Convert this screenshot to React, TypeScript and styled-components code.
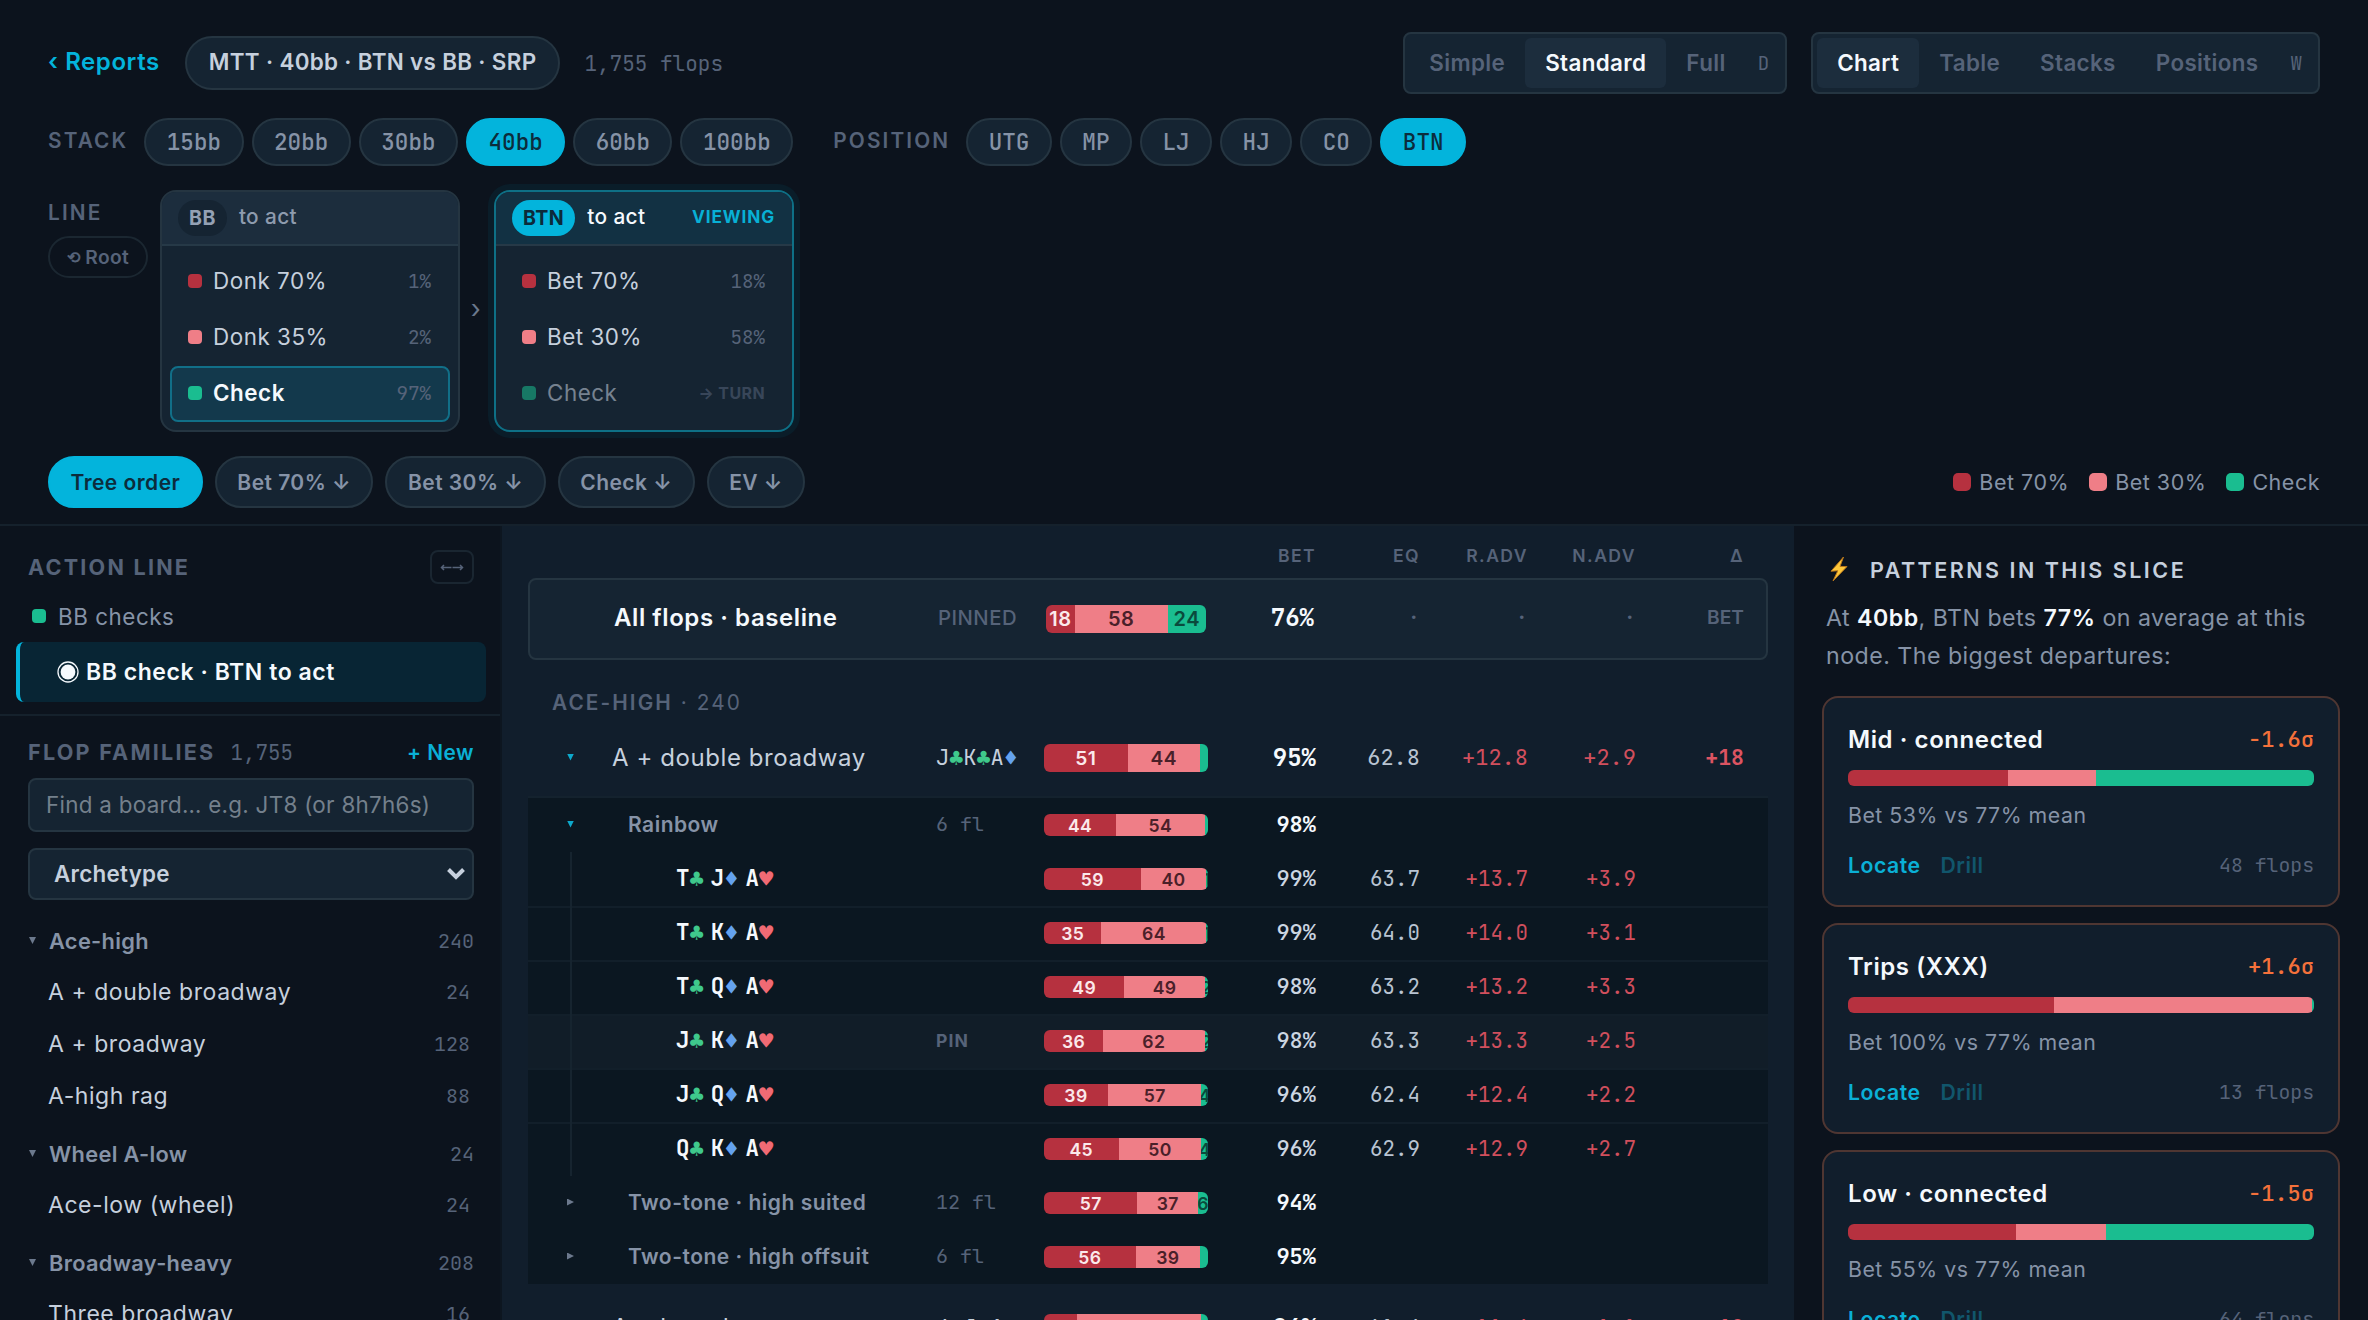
import { Fragment } from "react";
import styled, { createGlobalStyle, css } from "styled-components";

const sans = `Inter, "Liberation Sans", sans-serif`;

const mono = css`
  font-family: "JetBrains Mono", "DejaVu Sans Mono", "Liberation Mono", monospace;
  letter-spacing: 0;
`;

const color = {
  bg: "#0c131d",
  center: "#111e2c",
  sub: "#0b1721",
  surface: "#152432",
  raised: "#1c2d3d",
  line: "#253541",
  lineSoft: "#15212c",
  white: "#f5f9fd",
  text: "#c6d0dd",
  mid: "#8693a7",
  dim: "#566379",
  cyan: "#03b4dc",
  red: "#b6313f",
  pink: "#ef7e87",
  green: "#1abd90",
};

type Mix = [number, number, number];

interface IBoardCard {
  rank: string;
  suit: "c" | "d" | "h";
}

interface ILeaf {
  cards: IBoardCard[];
  mix: Mix;
  bet: string;
  eq: string;
  radv: string;
  nadv: string;
  pinned?: boolean;
}

const suitGlyph = { c: "♣", d: "♦", h: "♥" };
const suitColor = { c: "#3fc98c", d: "#64a2ee", h: "#f06a74" };

const stacks = ["15bb", "20bb", "30bb", "40bb", "60bb", "100bb"];
const positions = ["UTG", "MP", "LJ", "HJ", "CO", "BTN"];
const sorts = ["Tree order", "Bet 70% ↓", "Bet 30% ↓", "Check ↓", "EV ↓"];

const families = [
  {
    name: "Ace-high",
    count: 240,
    items: [
      { name: "A + double broadway", count: 24 },
      { name: "A + broadway", count: 128 },
      { name: "A-high rag", count: 88 },
    ],
  },
  {
    name: "Wheel A-low",
    count: 24,
    items: [{ name: "Ace-low (wheel)", count: 24 }],
  },
  {
    name: "Broadway-heavy",
    count: 208,
    items: [{ name: "Three broadway", count: 16 }],
  },
];

const board = (ranks: string, suits = "cdh"): IBoardCard[] =>
  ranks.split("").map((rank, i) => ({ rank, suit: suits[i] as "c" | "d" | "h" }));

const leaves: ILeaf[] = [
  { cards: board("TJA"), mix: [59, 40, 1], bet: "99%", eq: "63.7", radv: "+13.7", nadv: "+3.9" },
  { cards: board("TKA"), mix: [35, 64, 1], bet: "99%", eq: "64.0", radv: "+14.0", nadv: "+3.1" },
  { cards: board("TQA"), mix: [49, 49, 2], bet: "98%", eq: "63.2", radv: "+13.2", nadv: "+3.3" },
  { cards: board("JKA"), mix: [36, 62, 2], bet: "98%", eq: "63.3", radv: "+13.3", nadv: "+2.5", pinned: true },
  { cards: board("JQA"), mix: [39, 57, 4], bet: "96%", eq: "62.4", radv: "+12.4", nadv: "+2.2" },
  { cards: board("QKA"), mix: [45, 50, 4], bet: "96%", eq: "62.9", radv: "+12.9", nadv: "+2.7" },
];

const patterns = [
  { name: "Mid · connected", sigma: "-1.6σ", mix: [34.4, 18.9, 46.7] as Mix, bet: 53, flops: 48 },
  { name: "Trips (XXX)", sigma: "+1.6σ", mix: [44.3, 55.3, 0.4] as Mix, bet: 100, flops: 13 },
  { name: "Low · connected", sigma: "-1.5σ", mix: [36.1, 19.3, 44.6] as Mix, bet: 55, flops: 64 },
];

function Cards({ cards }: { cards: IBoardCard[] }) {
  return (
    <>
      {cards.map((card, i) => (
        <Card key={i}>
          {card.rank}
          <Suit $color={suitColor[card.suit]}>{suitGlyph[card.suit]}</Suit>
        </Card>
      ))}
    </>
  );
}

function MixBar({ mix, size = "sm", hideLast }: { mix: Mix; size?: "sm" | "lg" | "base"; hideLast?: boolean }) {
  const tones = ["red", "pink", "green"] as const;
  return (
    <Bar $size={size}>
      {mix.map((value, i) => (
        <Segment key={i} $tone={tones[i]} style={{ flexGrow: value }}>
          {!(hideLast && i === 2) && value}
        </Segment>
      ))}
    </Bar>
  );
}

function Header() {
  return (
    <TopBar>
      <TitleRow>
        <Back>‹ Reports</Back>
        <Scenario>MTT · 40bb · BTN vs BB · SRP</Scenario>
        <FlopCount>1,755 flops</FlopCount>
        <Spacer />
        <SegmentGroup>
          <SegmentButton>Simple</SegmentButton>
          <SegmentButton $active>Standard</SegmentButton>
          <SegmentButton>Full</SegmentButton>
          <Key>D</Key>
        </SegmentGroup>
        <SegmentGroup>
          <SegmentButton $active>Chart</SegmentButton>
          <SegmentButton>Table</SegmentButton>
          <SegmentButton>Stacks</SegmentButton>
          <SegmentButton>Positions</SegmentButton>
          <Key>W</Key>
        </SegmentGroup>
      </TitleRow>

      <FilterRow>
        <FilterGroup>
          <Label>STACK</Label>
          <Chips>
            {stacks.map((s) => (
              <Chip key={s} $active={s === "40bb"}>{s}</Chip>
            ))}
          </Chips>
        </FilterGroup>
        <FilterGroup>
          <Label>POSITION</Label>
          <Chips>
            {positions.map((p) => (
              <Chip key={p} $active={p === "BTN"}>{p}</Chip>
            ))}
          </Chips>
        </FilterGroup>
      </FilterRow>

      <LineRow>
        <LineLabel>
          <Label>LINE</Label>
          <RootButton>
            <span>⟲</span>Root
          </RootButton>
        </LineLabel>
        <NodeCard>
          <NodeHead>
            <Seat>BB</Seat>
            <ToAct>to act</ToAct>
          </NodeHead>
          <NodeBody>
            <Action>
              <Dot $tone="red" />
              Donk 70%
              <Pct>1%</Pct>
            </Action>
            <Action>
              <Dot $tone="pink" />
              Donk 35%
              <Pct>2%</Pct>
            </Action>
            <Action $selected>
              <Dot $tone="green" />
              Check
              <Pct>97%</Pct>
            </Action>
          </NodeBody>
        </NodeCard>
        <Arrow>›</Arrow>
        <NodeCard $viewing>
          <NodeHead $viewing>
            <Seat $viewing>BTN</Seat>
            <ToAct $viewing>to act</ToAct>
            <Viewing>VIEWING</Viewing>
          </NodeHead>
          <NodeBody>
            <Action>
              <Dot $tone="red" />
              Bet 70%
              <Pct>18%</Pct>
            </Action>
            <Action>
              <Dot $tone="pink" />
              Bet 30%
              <Pct>58%</Pct>
            </Action>
            <Action $faded>
              <Dot $tone="green" />
              Check
              <Turn>→ TURN</Turn>
            </Action>
          </NodeBody>
        </NodeCard>
      </LineRow>

      <SortRow>
        {sorts.map((s, i) => (
          <SortButton key={s} $active={i === 0}>{s}</SortButton>
        ))}
        <Legend>
          <LegendItem>
            <LegendDot $tone="red" />
            Bet 70%
          </LegendItem>
          <LegendItem>
            <LegendDot $tone="pink" />
            Bet 30%
          </LegendItem>
          <LegendItem>
            <LegendDot $tone="green" />
            Check
          </LegendItem>
        </Legend>
      </SortRow>
    </TopBar>
  );
}

function Sidebar() {
  return (
    <Side>
      <ActionLine>
        <SideHead>
          <SideTitle>ACTION LINE</SideTitle>
          <Collapse>
            <svg width="24" height="12" viewBox="0 0 24 12" fill="none" stroke="currentColor" strokeWidth="1.5">
              <path d="M4 4 1.500 6.500 4 9M1.500 6.500H11.500M12.500 6.500h10M20 4 22.500 6.500 20 9" />
            </svg>
          </Collapse>
        </SideHead>
        <PastAction>
          <Dot $tone="green" />
          BB checks
        </PastAction>
        <CurrentAction>
          <svg width="22" height="22" viewBox="0 0 22 22">
            <circle cx="11" cy="11" r="10" fill="none" stroke="currentColor" strokeWidth="1.3" />
            <circle cx="11" cy="11" r="7.4" fill="currentColor" />
          </svg>
          BB check · BTN to act
        </CurrentAction>
      </ActionLine>

      <Families>
        <FamiliesHead>
          <SideTitle>FLOP FAMILIES</SideTitle>
          <FamilyTotal>1,755</FamilyTotal>
          <NewLink>+ New</NewLink>
        </FamiliesHead>
        <Search placeholder="Find a board… e.g. JT8 (or 8h7h6s)" />
        <Select>
          Archetype
          <svg width="20" height="16" viewBox="0 0 20 16" fill="none" stroke="currentColor" strokeWidth="4">
            <path d="M2.500 3.500 10 11l7.500-7.500" />
          </svg>
        </Select>
      </Families>

      <FamilyList>
        {families.map((family) => (
          <Fragment key={family.name}>
            <FamilyGroup>
              <Triangle $dir="down" />
              {family.name}
              <FamilyCount>{family.count}</FamilyCount>
            </FamilyGroup>
            {family.items.map((item) => (
              <FamilyItem key={item.name}>
                {item.name}
                <FamilyCount>{item.count}</FamilyCount>
              </FamilyItem>
            ))}
          </Fragment>
        ))}
      </FamilyList>
    </Side>
  );
}

function FlopTable() {
  return (
    <Center>
      <HeadRow>
        <HeadCell />
        <HeadCell />
        <HeadCell />
        <HeadCell>BET</HeadCell>
        <HeadCell>EQ</HeadCell>
        <HeadCell>R.ADV</HeadCell>
        <HeadCell>N.ADV</HeadCell>
        <HeadCell>Δ</HeadCell>
      </HeadRow>

      <BaselineRow>
        <BaselineName>All flops · baseline</BaselineName>
        <Pinned>PINNED</Pinned>
        <MixBar mix={[18, 58, 24]} size="base" />
        <Bet $size={24}>76%</Bet>
        <Blank>·</Blank>
        <Blank>·</Blank>
        <Blank>·</Blank>
        <DeltaUnit>BET</DeltaUnit>
      </BaselineRow>

      <GroupTitle>
        <b>ACE-HIGH</b> · 240
      </GroupTitle>

      <FamilyRow>
        <Name>
          <Toggle><Triangle $dir="down" $active /></Toggle>
          A + double broadway
        </Name>
        <Boards><Cards cards={board("JKA", "ccd")} /></Boards>
        <MixBar mix={[51, 44, 5]} size="lg" hideLast />
        <Bet $size={24}>95%</Bet>
        <Num $size={22}>62.8</Num>
        <Adv $size={22}>+12.8</Adv>
        <Adv $size={22}>+2.9</Adv>
        <Delta>+18</Delta>
      </FamilyRow>

      <SubBlock>
        <SubRow>
          <SubName>
            <Toggle><Triangle $dir="down" $active /></Toggle>
            Rainbow
          </SubName>
          <FlCount>6 fl</FlCount>
          <MixBar mix={[44, 54, 2]} hideLast />
          <Bet $size={22}>98%</Bet>
        </SubRow>
        {leaves.map((leaf, i) => (
          <LeafRow key={i} $first={i === 0} $pinned={leaf.pinned}>
            <LeafName>
              <Guide />
              <Cards cards={leaf.cards} />
            </LeafName>
            <PinTag>{leaf.pinned && "PIN"}</PinTag>
            <MixBar mix={leaf.mix} />
            <Bet $size={22} $soft>{leaf.bet}</Bet>
            <Num $size={20.8}>{leaf.eq}</Num>
            <Adv $size={20.8}>{leaf.radv}</Adv>
            <Adv $size={20.8}>{leaf.nadv}</Adv>
          </LeafRow>
        ))}
        <SubRow>
          <SubName>
            <Toggle><Triangle $dir="right" /></Toggle>
            Two-tone · high suited
          </SubName>
          <FlCount>12 fl</FlCount>
          <MixBar mix={[57, 37, 6]} />
          <Bet $size={22}>94%</Bet>
        </SubRow>
        <SubRow>
          <SubName>
            <Toggle><Triangle $dir="right" /></Toggle>
            Two-tone · high offsuit
          </SubName>
          <FlCount>6 fl</FlCount>
          <MixBar mix={[56, 39, 5]} hideLast />
          <Bet $size={22}>95%</Bet>
        </SubRow>
      </SubBlock>

      <FamilyRow>
        <Name>
          <Toggle><Triangle $dir="right" /></Toggle>
          A + broadway
        </Name>
        <Boards><Cards cards={board("4JA", "ccd")} /></Boards>
        <MixBar mix={[20, 76, 4]} size="lg" hideLast />
        <Bet $size={24}>96%</Bet>
        <Num $size={22}>61.4</Num>
        <Adv $size={22}>+11.4</Adv>
        <Adv $size={22}>+1.1</Adv>
        <Delta>+19</Delta>
      </FamilyRow>
    </Center>
  );
}

function Patterns() {
  return (
    <Aside>
      <AsideTitle>
        <svg width="20" height="26" viewBox="0 0 20 26">
          <path d="M14.500 0 2 14.200l6.800-.4L4 24 18 9.600l-7-.2z" fill="#ffc83a" stroke="#b9761b" strokeWidth="1" />
        </svg>
        PATTERNS IN THIS SLICE
      </AsideTitle>
      <Summary>
        At <b>40bb</b>, BTN bets <b>77%</b> on average at this node. The biggest departures:
      </Summary>
      {patterns.map((p) => (
        <PatternCard key={p.name}>
          <PatternHead>
            {p.name}
            <Sigma>{p.sigma}</Sigma>
          </PatternHead>
          <PatternBar>
            <Segment $tone="red" style={{ flexGrow: p.mix[0] }} />
            <Segment $tone="pink" style={{ flexGrow: p.mix[1] }} />
            <Segment $tone="green" style={{ flexGrow: p.mix[2] }} />
          </PatternBar>
          <PatternMeta>Bet {p.bet}% vs 77% mean</PatternMeta>
          <PatternFoot>
            <Locate>Locate</Locate>
            <Drill>Drill</Drill>
            <PatternFlops>{p.flops} flops</PatternFlops>
          </PatternFoot>
        </PatternCard>
      ))}
    </Aside>
  );
}

export default function App() {
  return (
    <>
      <GlobalStyle />
      <Page>
        <Header />
        <Main>
          <Sidebar />
          <FlopTable />
          <Patterns />
        </Main>
      </Page>
    </>
  );
}

const GlobalStyle = createGlobalStyle`
  * {
    box-sizing: border-box;
    letter-spacing: 0.024em;
  }

  b {
    letter-spacing: inherit;
  }

  body {
    margin: 0;
    background: ${color.bg};
    color: ${color.text};
    font-family: ${sans};
    overflow: hidden;
  }
`;

const Page = styled.div`
  width: 2368px;
  height: 1320px;
  display: flex;
  flex-direction: column;
  overflow: hidden;
`;

const TopBar = styled.header`
  flex: none;
  padding: 32px 48px 16px;
  display: flex;
  flex-direction: column;
  gap: 24px;
  border-bottom: 2px solid ${color.lineSoft};
`;

const TitleRow = styled.div`
  height: 62px;
  display: flex;
  align-items: center;
  gap: 24px;
`;

const Back = styled.a`
  padding: 0 1px 3px 0;
  color: ${color.cyan};
  font-size: 24px;
  font-weight: 600;
  white-space: nowrap;
`;

const Scenario = styled.div`
  height: 54px;
  padding: 0 22px 3px;
  display: flex;
  align-items: center;
  border: 2px solid ${color.line};
  border-radius: 27px;
  background: ${color.surface};
  font-size: 22.4px;
  font-weight: 600;
  letter-spacing: 0.015em;
  white-space: nowrap;
`;

const FlopCount = styled.span`
  ${mono}
  color: ${color.dim};
  font-size: 21px;
`;

const Spacer = styled.div`
  flex: 1;
`;

const SegmentGroup = styled.div`
  height: 62px;
  padding: 4px;
  display: flex;
  align-items: center;
  border: 2px solid ${color.line};
  border-radius: 8px;
  background: ${color.surface};
`;

const SegmentButton = styled.button<{ $active?: boolean }>`
  all: unset;
  box-sizing: border-box;
  height: 50px;
  padding: 0 20px 2px;
  display: flex;
  align-items: center;
  border-radius: 6px;
  color: ${({ $active }) => ($active ? color.white : color.dim)};
  background: ${({ $active }) => ($active ? color.raised : "none")};
  font-size: 22.4px;
  font-weight: 600;
  letter-spacing: 0.016em;
`;

const Key = styled.span`
  ${mono}
  padding: 0 12px;
  color: ${color.dim};
  font-size: 19.2px;
`;

const FilterRow = styled.div`
  height: 48px;
  display: flex;
  gap: 40px;
`;

const FilterGroup = styled.div`
  display: flex;
  align-items: center;
  gap: 16px;
`;

const Label = styled.span`
  padding-bottom: 2px;
  color: ${color.dim};
  font-size: 20.8px;
  font-weight: 600;
  line-height: 20px;
  letter-spacing: 0.102em;
`;

const Chips = styled.div`
  display: flex;
  gap: 8px;
`;

const Chip = styled.button<{ $active?: boolean }>`
  all: unset;
  ${mono}
  box-sizing: border-box;
  height: 48px;
  padding: 0 20.5px 1px;
  display: flex;
  align-items: center;
  border: 2px solid ${({ $active }) => ($active ? color.cyan : color.line)};
  border-radius: 24px;
  background: ${({ $active }) => ($active ? color.cyan : color.surface)};
  color: ${({ $active }) => ($active ? "#0c2c3c" : color.mid)};
  font-size: 22.6px;
  font-weight: 500;
`;

const LineRow = styled.div`
  height: 242px;
  display: flex;
`;

const LineLabel = styled.div`
  width: 112px;
  padding-top: 13px;
  display: flex;
  flex-direction: column;
  align-items: flex-start;
  gap: 11px;
`;

const RootButton = styled.button`
  all: unset;
  box-sizing: border-box;
  width: 100px;
  height: 42px;
  display: flex;
  align-items: center;
  justify-content: center;
  gap: 5px;
  border: 2px solid #1b2731;
  border-radius: 21px;
  color: ${color.dim};
  font-size: 19.2px;
  font-weight: 600;
  letter-spacing: 0.02em;

  span {
    font-size: 16px;
  }
`;

const NodeCard = styled.div<{ $viewing?: boolean }>`
  width: 300px;
  border: 2px solid ${({ $viewing }) => ($viewing ? "#0e7086" : color.line)};
  border-radius: 16px;
  background: ${color.surface};
  ${({ $viewing }) => $viewing && "box-shadow: 0 0 0 6px #0a1d29;"}
  overflow: hidden;
`;

const NodeHead = styled.div<{ $viewing?: boolean }>`
  height: 54px;
  padding: 0 17px 0 16px;
  display: flex;
  align-items: center;
  gap: 12px;
  border-bottom: 2px solid #263947;
  background: ${({ $viewing }) => ($viewing ? "#123143" : color.raised)};
`;

const Seat = styled.span<{ $viewing?: boolean }>`
  height: 36px;
  padding: 0 11px 1px;
  display: flex;
  align-items: center;
  border-radius: 18px;
  background: ${({ $viewing }) => ($viewing ? color.cyan : color.surface)};
  color: ${({ $viewing }) => ($viewing ? "#0c2a3a" : "#94a1b4")};
  font-size: 19.6px;
  font-weight: 700;
`;

const ToAct = styled.span<{ $viewing?: boolean }>`
  padding-bottom: 3px;
  color: ${({ $viewing }) => ($viewing ? color.white : "#8e9bae")};
  font-size: 20.8px;
  font-weight: 500;
  letter-spacing: 0.018em;
`;

const Viewing = styled.span`
  margin-left: auto;
  padding-bottom: 4px;
  color: #08b0d5;
  font-size: 17.2px;
  font-weight: 700;
  letter-spacing: 0.052em;
`;

const NodeBody = styled.div`
  padding: 8px;
`;

const Dot = styled.i<{ $tone: "red" | "pink" | "green" }>`
  width: 14px;
  height: 14px;
  flex: none;
  border-radius: 4px;
  background: ${({ $tone }) => color[$tone]};
`;

const Action = styled.div<{ $selected?: boolean; $faded?: boolean }>`
  height: 56px;
  padding: 0 17px 3px 16px;
  display: flex;
  align-items: center;
  gap: 11px;
  border: 2px solid transparent;
  border-radius: 8px;
  font-size: 22.4px;
  opacity: ${({ $faded }) => ($faded ? 0.55 : 1)};

  ${({ $selected }) =>
    $selected &&
    css`
      border-color: #116f88;
      background: #13394c;
      color: ${color.white};
      font-weight: 600;
    `}
`;

const Pct = styled.span`
  ${mono}
  margin-left: auto;
  color: ${color.dim};
  font-size: 19.2px;
  font-weight: 400;
`;

const Turn = styled.span`
  margin-left: auto;
  color: ${color.dim};
  font-size: 16px;
  font-weight: 700;
`;

const Arrow = styled.span`
  width: 34px;
  padding: 0 2px 5px 0;
  display: flex;
  align-items: center;
  justify-content: center;
  color: #6b788c;
  font-size: 26px;
`;

const SortRow = styled.div`
  height: 52px;
  display: flex;
  align-items: center;
  gap: 12px;
`;

const SortButton = styled.button<{ $active?: boolean }>`
  all: unset;
  box-sizing: border-box;
  height: 52px;
  padding: 0 20.5px;
  display: flex;
  align-items: center;
  border: 2px solid ${({ $active }) => ($active ? color.cyan : color.line)};
  border-radius: 26px;
  background: ${({ $active }) => ($active ? color.cyan : color.surface)};
  color: ${({ $active }) => ($active ? "#0c2c3c" : color.mid)};
  font-size: 21px;
  font-weight: 600;
  letter-spacing: 0.022em;
  white-space: nowrap;
`;

const Legend = styled.div`
  margin-left: auto;
  display: flex;
  gap: 20px;
`;

const LegendItem = styled.span`
  display: flex;
  align-items: center;
  gap: 8px;
  color: ${color.mid};
  font-size: 21.5px;
`;

const LegendDot = styled(Dot)`
  width: 18px;
  height: 18px;
  border-radius: 5px;
`;

const Main = styled.main`
  flex: 1;
  min-height: 0;
  display: flex;
`;

const Side = styled.aside`
  width: 502px;
  flex: none;
  border-right: 2px solid #0d1620;
`;

const ActionLine = styled.section`
  padding: 24px 14px 12px 16px;
  border-bottom: 2px solid ${color.lineSoft};
`;

const SideHead = styled.div`
  height: 34px;
  margin-bottom: 6px;
  padding: 0 12px;
  display: flex;
  align-items: center;
  justify-content: space-between;
`;

const SideTitle = styled.h2`
  margin: 0;
  padding-bottom: 1px;
  color: ${color.dim};
  font-size: 21.6px;
  font-weight: 700;
  letter-spacing: 0.103em;
`;

const Collapse = styled.button`
  all: unset;
  box-sizing: border-box;
  width: 44px;
  height: 34px;
  display: flex;
  align-items: center;
  justify-content: center;
  border: 2px solid #1a2631;
  border-radius: 8px;
  color: ${color.dim};
`;

const PastAction = styled.div`
  height: 52px;
  padding-left: 16px;
  display: flex;
  align-items: center;
  gap: 12px;
  color: ${color.mid};
  font-size: 22.4px;
`;

const CurrentAction = styled.div`
  height: 60px;
  padding-left: 37px;
  display: flex;
  align-items: center;
  gap: 7px;
  border-left: 4px solid ${color.cyan};
  border-radius: 8px;
  background: #082534;
  color: ${color.white};
  font-size: 23px;
  font-weight: 600;
`;

const Families = styled.section`
  padding: 20px 26px 0 28px;
`;

const FamiliesHead = styled.div`
  height: 32px;
  margin-bottom: 10px;
  display: flex;
  align-items: center;
`;

const FamilyTotal = styled.span`
  ${mono}
  margin-left: 15px;
  color: ${color.dim};
  font-size: 20.8px;
`;

const NewLink = styled.a`
  margin-left: auto;
  color: #0ab0d6;
  font-size: 20.8px;
  font-weight: 600;
`;

const Search = styled.input`
  display: block;
  width: 446px;
  height: 54px;
  padding: 0 16px 2px;
  border: 2px solid ${color.line};
  border-radius: 8px;
  background: ${color.surface};
  font-family: ${sans};
  font-size: 22.4px;
  letter-spacing: 0.013em;

  &::placeholder {
    color: #74808c;
    letter-spacing: 0.013em;
  }
`;

const Select = styled.div`
  width: 446px;
  height: 52px;
  margin-top: 16px;
  padding: 0 6px 1px 24px;
  display: flex;
  align-items: center;
  justify-content: space-between;
  border: 2px solid ${color.line};
  border-radius: 8px;
  background: ${color.surface};
  font-size: 22.4px;
  font-weight: 600;
  letter-spacing: 0.012em;
`;

const FamilyList = styled.div`
  padding: 9px 26px 0 28px;
`;

const FamilyGroup = styled.div`
  height: 57px;
  padding: 6px 0 0 1px;
  display: flex;
  align-items: center;
  gap: 13px;
  color: ${color.mid};
  font-size: 21.8px;
  font-weight: 600;
  letter-spacing: 0.015em;
`;

const FamilyCount = styled.span`
  ${mono}
  margin-left: auto;
  color: ${color.dim};
  font-size: 20px;
  font-weight: 400;
`;

const FamilyItem = styled.div`
  height: 52px;
  padding: 0 4px 0 20px;
  display: flex;
  align-items: center;
  font-size: 23px;
`;

const Triangle = styled.i<{ $dir: "down" | "right"; $active?: boolean }>`
  width: 7px;
  height: 7px;
  flex: none;
  background: ${({ $active }) => ($active ? "#0da9cc" : "#6c798d")};
  clip-path: ${({ $dir }) =>
    $dir === "down" ? "polygon(0 0, 100% 0, 50% 100%)" : "polygon(0 0, 100% 50%, 0 100%)"};
`;

const Center = styled.section`
  width: 1292px;
  flex: none;
  padding: 0 26px;
  background: ${color.center};
`;

const row = css`
  display: grid;
  grid-template-columns: 408px 108px 164px 108px 104px 108px 108px 108px;
  align-items: center;

  > span {
    padding-bottom: 2px;
  }
`;

const HeadRow = styled.div`
  ${row}
  height: 52px;
  padding-top: 9px;
`;

const HeadCell = styled.span`
  color: ${color.dim};
  font-size: 17.6px;
  font-weight: 600;
  letter-spacing: 0.08em;
  text-align: right;
`;

const BaselineRow = styled.div`
  ${row}
  grid-template-columns: 408px 108px 160px 108px 106px 108px 108px 108px;
  height: 82px;
  border: 2px solid ${color.line};
  border-radius: 8px;
  background: ${color.surface};

  > span {
    padding-bottom: 4px;
  }
`;

const BaselineName = styled.span`
  padding-left: 84px;
  color: ${color.white};
  font-size: 24px;
  font-weight: 600;
`;

const Pinned = styled.span`
  color: ${color.dim};
  font-size: 20.3px;
  font-weight: 500;
`;

const GroupTitle = styled.div`
  height: 58px;
  padding: 27px 0 0 24px;
  color: ${color.dim};
  font-size: 20.8px;
  line-height: 31px;
  letter-spacing: 0.1em;

  b {
    font-weight: 600;
  }
`;

const FamilyRow = styled.div`
  ${row}
  height: 80px;
  box-shadow: inset 0 -2px #14222e;
`;

const Name = styled.span`
  display: flex;
  align-items: center;
  font-size: 24px;
`;

const Toggle = styled.span`
  width: 84px;
  padding-left: 39px;
  display: flex;
`;

const Boards = styled.span`
  ${mono}
  display: flex;
  font-size: 22px;
`;

const Card = styled.span`
  display: inline-flex;
  align-items: center;
  letter-spacing: 0;
`;

const Suit = styled.span<{ $color: string }>`
  color: ${({ $color }) => $color};
  font-size: 1.06em;
  letter-spacing: 0;
`;

const barSize = {
  sm: "width: 164px; height: 22px; font-size: 17.6px;",
  lg: "width: 164px; height: 28px; font-size: 19.2px;",
  base: "width: 160px; height: 28px; font-size: 20px;",
};

const Bar = styled.div<{ $size: "sm" | "lg" | "base" }>`
  display: flex;
  border-radius: 6px;
  overflow: hidden;
  ${({ $size }) => barSize[$size]}
`;

const Segment = styled.div<{ $tone: "red" | "pink" | "green" }>`
  flex: 1 1 0;
  min-width: 0;
  display: flex;
  align-items: center;
  justify-content: center;
  overflow: hidden;
  background: ${({ $tone }) => color[$tone]};
  color: ${({ $tone }) => ({ red: "#fbe9eb", pink: "#4a2029", green: "#0a4a3c" })[$tone]};
  font-weight: 600;
`;

const Bet = styled.span<{ $size: number; $soft?: boolean }>`
  ${mono}
  color: ${({ $soft }) => ($soft ? "#ccd6e2" : color.white)};
  font-size: ${({ $size }) => $size}px;
  font-weight: ${({ $soft }) => ($soft ? 500 : 600)};
  text-align: right;
`;

const Num = styled.span<{ $size: number }>`
  ${mono}
  color: #b9c4d2;
  font-size: ${({ $size }) => $size}px;
  text-align: right;
`;

const Adv = styled(Num)`
  color: #d14f5d;
`;

const Delta = styled.span`
  ${mono}
  color: #dc5462;
  font-size: 21.5px;
  font-weight: 600;
  text-align: right;
`;

const Blank = styled.span`
  ${mono}
  color: ${color.dim};
  font-size: 20.8px;
  text-align: right;
`;

const DeltaUnit = styled.span`
  color: ${color.dim};
  font-size: 19.2px;
  font-weight: 600;
  letter-spacing: 0;
  text-align: right;
`;

const SubBlock = styled.div`
  margin-bottom: 4px;
  background: ${color.sub};
`;

const SubRow = styled.div`
  ${row}
  height: 54px;
`;

const SubName = styled(Name)`
  color: ${color.mid};
  font-size: 21px;
  font-weight: 600;

  ${Toggle} {
    width: 100px;
  }
`;

const FlCount = styled.span`
  ${mono}
  color: ${color.dim};
  font-size: 20px;
`;

const LeafRow = styled.div<{ $first?: boolean; $pinned?: boolean }>`
  ${row}
  height: 54px;
  background: ${({ $pinned }) => ($pinned ? "#111d28" : "none")};
  box-shadow: ${({ $first }) => ($first ? "none" : "inset 0 2px #121f2a")};
`;

const LeafName = styled.span`
  ${mono}
  height: 54px;
  display: flex;
  align-items: center;
  gap: 7px;
  color: ${color.white};
  font-size: 22.4px;
  font-weight: 600;
`;

const Guide = styled.i`
  width: 2px;
  height: 54px;
  margin: 0 97px -2px 42px;
  background: #16242f;
`;

const PinTag = styled.span`
  color: ${color.dim};
  font-size: 17.6px;
  font-weight: 700;
  letter-spacing: 0.06em;
`;

const Aside = styled.aside`
  flex: 1;
  padding: 26px 28px 0;
`;

const AsideTitle = styled.h2`
  height: 36px;
  margin: 0 0 11px;
  padding-left: 7px;
  display: flex;
  align-items: center;
  gap: 21px;
  color: ${color.text};
  font-size: 21.5px;
  font-weight: 600;
  letter-spacing: 0.116em;
`;

const Summary = styled.p`
  margin: 0 0 20px;
  padding-left: 4px;
  color: ${color.mid};
  font-size: 23.2px;
  line-height: 38.4px;
  letter-spacing: 0.02em;

  b {
    color: ${color.white};
    font-weight: 600;
  }
`;

const PatternCard = styled.article`
  height: 211px;
  margin-bottom: 16px;
  padding: 24px 24px 0;
  border: 2px solid #4f3632;
  border-radius: 16px;
  background: ${color.center};
`;

const PatternHead = styled.div`
  height: 36px;
  display: flex;
  align-items: center;
  justify-content: space-between;
  color: ${color.white};
  font-size: 24px;
  font-weight: 600;
`;

const Sigma = styled.span`
  ${mono}
  color: #f4713b;
  font-size: 22px;
  font-weight: 500;
`;

const PatternBar = styled.div`
  height: 16px;
  margin-top: 12px;
  display: flex;
  border-radius: 6px;
  overflow: hidden;
`;

const PatternMeta = styled.div`
  margin-top: 14px;
  color: ${color.mid};
  font-size: 21.3px;
  line-height: 30px;
`;

const PatternFoot = styled.div`
  margin-top: 20px;
  display: flex;
  align-items: center;
  gap: 20px;
  font-size: 21.2px;
  font-weight: 600;
  line-height: 30px;
`;

const Locate = styled.a`
  color: #0ab0d6;
`;

const Drill = styled.a`
  color: #11566c;
`;

const PatternFlops = styled.span`
  ${mono}
  margin-left: auto;
  color: ${color.dim};
  font-size: 19.8px;
  font-weight: 400;
`;
